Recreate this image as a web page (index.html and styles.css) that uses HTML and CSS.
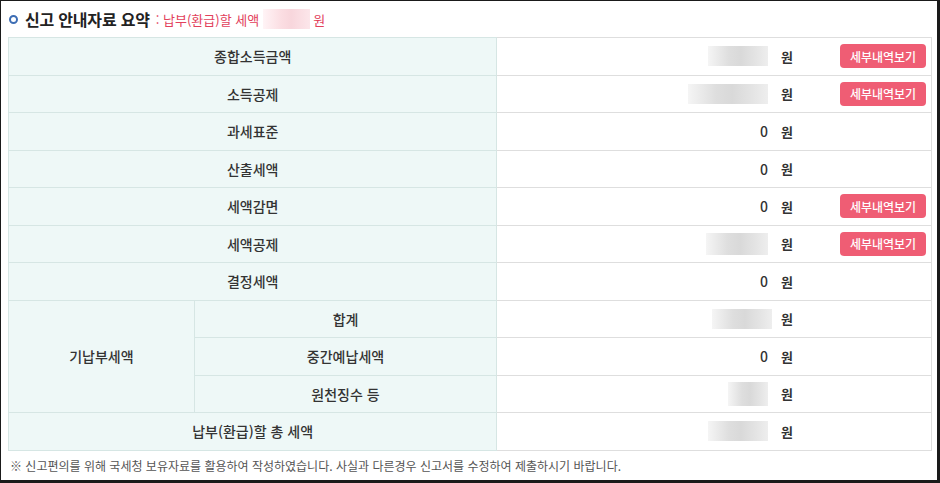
FILE: index.html
```html
<!DOCTYPE html>
<html lang="ko">
<head>
  <meta charset="UTF-8">
  <title>신고 안내자료 요약</title>
  <link rel="stylesheet" href="styles.css">
</head>
<body>
  <div class="frame">
    <div class="title-row">
      <span class="title-dot"></span>
      <h2 class="title">신고 안내자료 요약</h2>
      <span class="title-sub">: 납부(환급)할 세액<span class="blur blur-pink"></span>원</span>
    </div>

    <table class="summary">
      <colgroup>
        <col class="c-main">
        <col class="c-sub">
        <col class="c-value">
      </colgroup>
      <tr>
        <th colspan="2">종합소득금액</th>
        <td><div class="val"><span class="blur w60"></span><span class="unit">원</span><span class="slot"><button class="detail-btn">세부내역보기</button></span></div></td>
      </tr>
      <tr>
        <th colspan="2">소득공제</th>
        <td><div class="val"><span class="blur w80"></span><span class="unit">원</span><span class="slot"><button class="detail-btn">세부내역보기</button></span></div></td>
      </tr>
      <tr>
        <th colspan="2">과세표준</th>
        <td><div class="val"><span class="num">0</span><span class="unit">원</span><span class="slot"></span></div></td>
      </tr>
      <tr>
        <th colspan="2">산출세액</th>
        <td><div class="val"><span class="num">0</span><span class="unit">원</span><span class="slot"></span></div></td>
      </tr>
      <tr>
        <th colspan="2">세액감면</th>
        <td><div class="val"><span class="num">0</span><span class="unit">원</span><span class="slot"><button class="detail-btn">세부내역보기</button></span></div></td>
      </tr>
      <tr>
        <th colspan="2">세액공제</th>
        <td><div class="val"><span class="blur w62"></span><span class="unit">원</span><span class="slot"><button class="detail-btn">세부내역보기</button></span></div></td>
      </tr>
      <tr>
        <th colspan="2">결정세액</th>
        <td><div class="val"><span class="num">0</span><span class="unit">원</span><span class="slot"></span></div></td>
      </tr>
      <tr>
        <th rowspan="3">기납부세액</th>
        <th class="sub">합계</th>
        <td><div class="val"><span class="blur w60 shift"></span><span class="unit">원</span><span class="slot"></span></div></td>
      </tr>
      <tr>
        <th class="sub">중간예납세액</th>
        <td><div class="val"><span class="num">0</span><span class="unit">원</span><span class="slot"></span></div></td>
      </tr>
      <tr>
        <th class="sub">원천징수 등</th>
        <td><div class="val"><span class="blur w40"></span><span class="unit">원</span><span class="slot"></span></div></td>
      </tr>
      <tr>
        <th colspan="2">납부(환급)할 총 세액</th>
        <td><div class="val"><span class="blur w60"></span><span class="unit">원</span><span class="slot"></span></div></td>
      </tr>
    </table>

    <p class="note">※ 신고편의를 위해 국세청 보유자료를 활용하여 작성하였습니다. 사실과 다른경우 신고서를 수정하여 제출하시기 바랍니다.</p>
  </div>
</body>
</html>
```

FILE: styles.css
```css
/* General */
* {
  margin: 0;
  padding: 0;
  box-sizing: border-box;
}

body {
  font-family: "Noto Sans CJK KR", "Noto Sans", sans-serif;
  color: #333;
  background: #fff;
}

.frame {
  width: 940px;
  height: 483px;
  border: solid #1a1a1a;
  border-width: 1px 3px 3px 1px;
  padding: 0 5px 0 7px;
}

/* Title */
.title-row {
  display: flex;
  align-items: center;
  height: 36px;
  padding-left: 1px;
}

.title-dot {
  width: 9px;
  height: 9px;
  border: 2px solid #3d6db4;
  border-radius: 50%;
  margin-right: 7px;
}

.title {
  font-size: 16px;
  font-weight: 700;
  color: #222;
  letter-spacing: -0.2px;
}

.title-sub {
  display: flex;
  align-items: center;
  margin-left: 6px;
  font-size: 13px;
  color: #e2415c;
}

.blur {
  display: inline-block;
  height: 20px;
  background: linear-gradient(90deg, #f5f5f5, #dedede 35%, #d9d9d9 55%, #e4e4e4 80%, #eeeeee);
}

.blur-pink {
  width: 47px;
  margin: 0 3px 0 4px;
  background: linear-gradient(90deg, #fff4f6, #fbdde2 40%, #f8d6dc 60%, #fce6ea);
}

/* Table */
.summary {
  width: 924px;
  border-collapse: collapse;
  border: 1px solid #dcdcdc;
}

.c-main { width: 186px; }
.c-sub { width: 303px; }
.c-value { width: 435px; }

.summary tr {
  height: 37.5px;
}

.summary th {
  background: #eef8f7;
  border: 1px solid #d6e6e4;
  font-size: 14px;
  font-weight: 500;
  color: #333;
}

.summary td {
  border: 1px solid #dedede;
  padding-right: 5px;
}

.val {
  display: flex;
  align-items: center;
  justify-content: flex-end;
}

.num {
  font-size: 14px;
  font-weight: 500;
}

.unit {
  margin-left: 13px;
  font-size: 13px;
  font-weight: 700;
  color: #333;
}

.slot {
  width: 86px;
  margin-left: 47px;
}

.w40 { width: 40px; height: 24px; }
.w60 { width: 60px; }
.w62 { width: 62px; height: 22px; }
.w80 { width: 80px; }
.shift { margin-right: -4px; }

.detail-btn {
  display: block;
  width: 86px;
  height: 24px;
  border: none;
  border-radius: 4px;
  background: #ef5d74;
  color: #fff;
  font-family: inherit;
  font-size: 12px;
  font-weight: 500;
  cursor: pointer;
}

.detail-btn:hover {
  background: #e04862;
}

/* Note */
.note {
  margin-top: 6px;
  padding-left: 2px;
  font-size: 12px;
  color: #555;
}
```
